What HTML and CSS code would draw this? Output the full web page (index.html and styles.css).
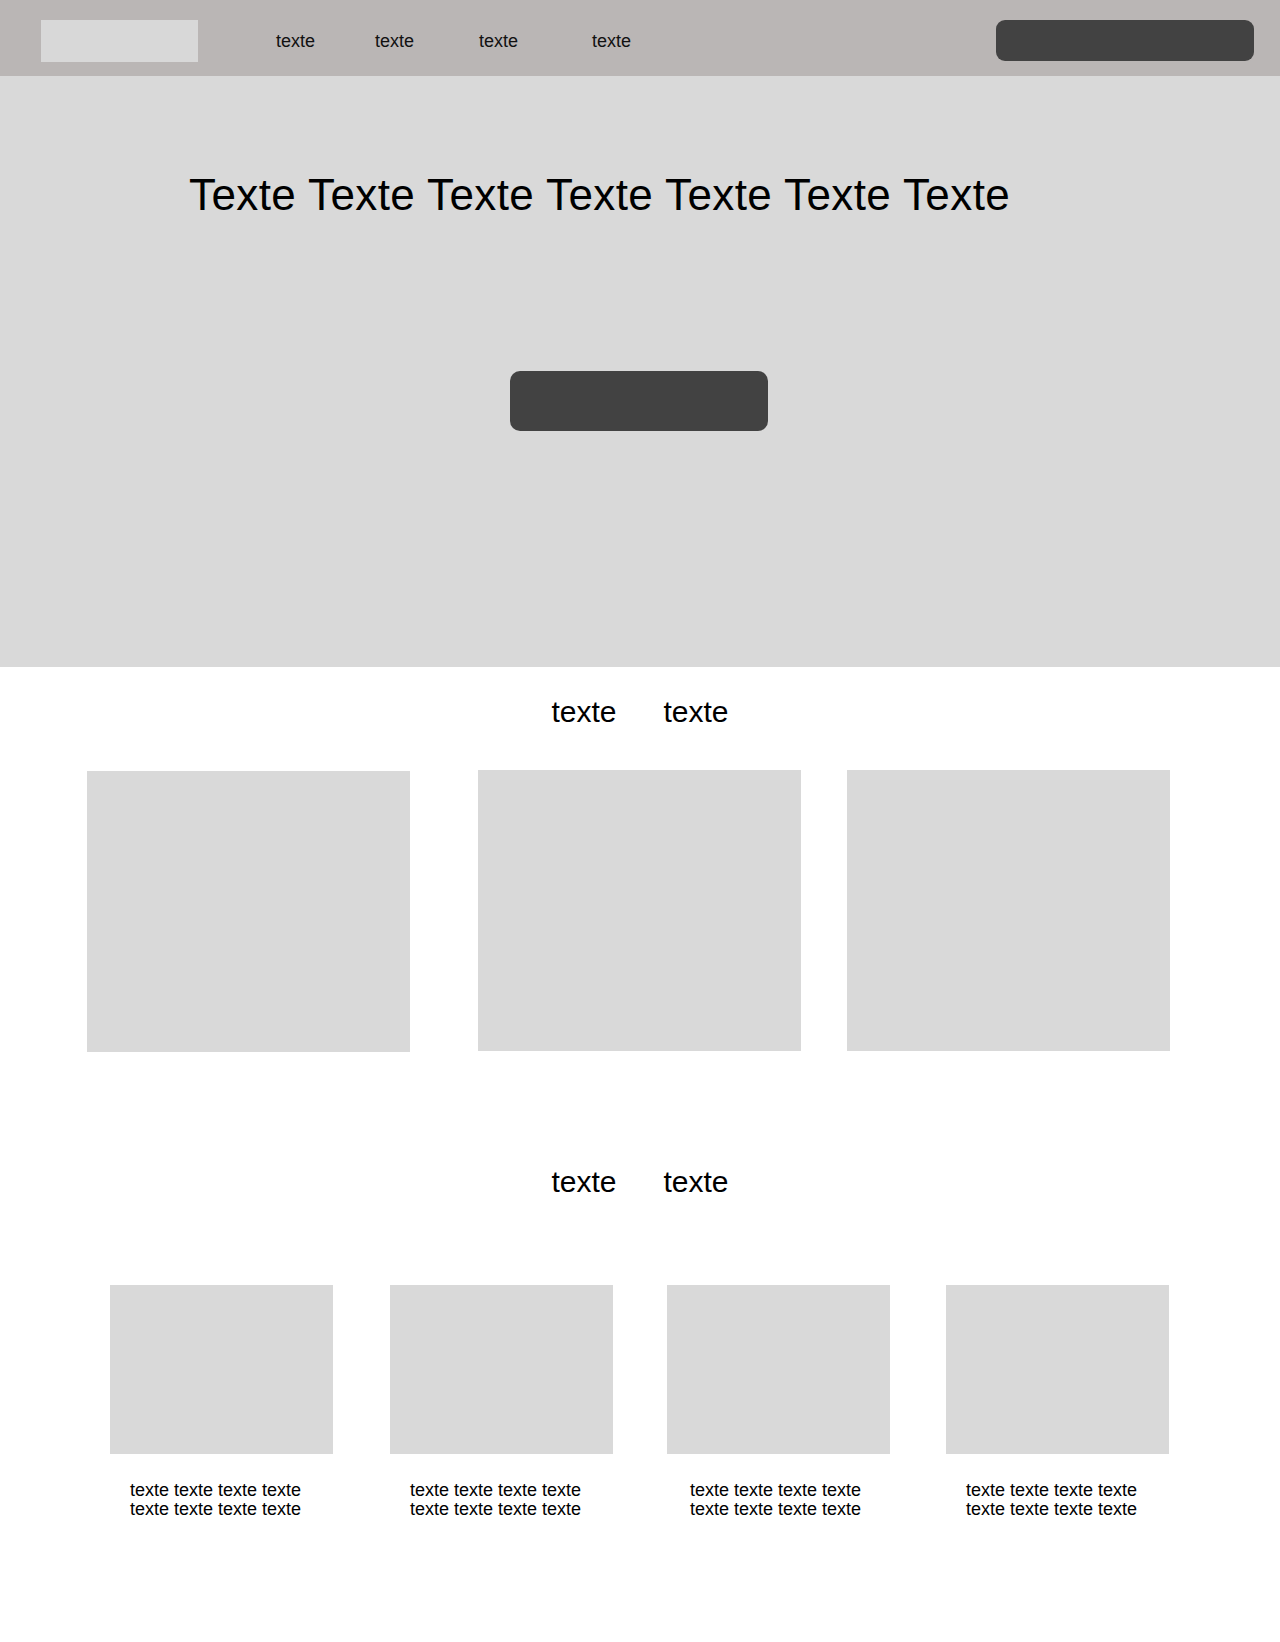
FILE: index.html
```html
<!DOCTYPE html>
<html>

<head>
    <meta name="viewport" content="width=device-width, initial-scale=1.0">
    <title>Texte</title>
    <link rel="stylesheet" href="styles.css">
</head>

<body>
    <header class="header">
        <div class="logo"></div>
        <nav class="nav">
            <a class="nav-link">texte</a>
            <a class="nav-link">texte</a>
            <a class="nav-link">texte</a>
            <a class="nav-link">texte</a>
        </nav>
        <div class="header-btn"></div>
    </header>

    <section class="hero">
        <h1 class="hero-title">Texte Texte Texte Texte Texte Texte Texte</h1>
        <div class="hero-btn"></div>
    </section>

    <section class="block">
        <div class="block-title">
            <span>texte</span>
            <span>texte</span>
        </div>
        <div class="row-big">
            <div class="card-big first"></div>
            <div class="card-big"></div>
            <div class="card-big"></div>
        </div>
    </section>

    <section class="block block-small">
        <div class="block-title">
            <span>texte</span>
            <span>texte</span>
        </div>
        <div class="row-small">
            <div class="item">
                <div class="item-img"></div>
                <p class="item-text">texte texte texte texte<br>texte texte texte texte</p>
            </div>
            <div class="item">
                <div class="item-img"></div>
                <p class="item-text">texte texte texte texte<br>texte texte texte texte</p>
            </div>
            <div class="item">
                <div class="item-img"></div>
                <p class="item-text">texte texte texte texte<br>texte texte texte texte</p>
            </div>
            <div class="item">
                <div class="item-img"></div>
                <p class="item-text">texte texte texte texte<br>texte texte texte texte</p>
            </div>
        </div>
    </section>
</body>

</html>
```

FILE: styles.css
```css
body {
    margin: 0;
    font-family: "Liberation Sans", Arial, sans-serif;
    color: #000000;
    background: #ffffff;
}

.header {
    height: 76px;
    box-sizing: border-box;
    padding-top: 20px;
    background: #bab6b5;
    display: flex;
    align-items: flex-start;
}

.logo {
    width: 157px;
    height: 42px;
    margin-left: 41px;
    background: #d8d8d8;
}

.nav {
    display: flex;
    margin: 12px 0 0 78px;
}

.nav-link {
    font-size: 18px;
    line-height: 1;
    color: #111111;
}

.nav-link:nth-child(2) {
    margin-left: 60px;
}

.nav-link:nth-child(3) {
    margin-left: 65px;
}

.nav-link:nth-child(4) {
    margin-left: 74px;
}

.header-btn {
    margin-left: auto;
    margin-right: 26px;
    width: 258px;
    height: 41px;
    border-radius: 9px;
    background: #424242;
}

.hero {
    height: 591px;
    background: #d9d9d9;
    padding-top: 97px;
    box-sizing: border-box;
}

.hero-title {
    margin: 0 0 0 189px;
    font-size: 44px;
    font-weight: normal;
    letter-spacing: 0.4px;
    line-height: 1;
}

.hero-btn {
    width: 258px;
    height: 60px;
    margin: 154px 0 0 510px;
    border-radius: 10px;
    background: #424242;
}

.block-title {
    display: flex;
    justify-content: center;
    gap: 47px;
    margin-top: 30px;
    font-size: 30px;
    line-height: 1;
}

.row-big {
    display: flex;
    align-items: flex-start;
    margin: 43px 0 0 87px;
}

.card-big {
    width: 323px;
    height: 281px;
    background: #d9d9d9;
    margin-left: 46px;
}

.card-big.first {
    margin-left: 0;
    margin-top: 1px;
    margin-right: 22px;
}

.block-small .block-title {
    margin-top: 115px;
}

.row-small {
    display: flex;
    margin: 88px 0 0 110px;
    padding-bottom: 130px;
}

.item {
    width: 223px;
}

.item:nth-child(2) {
    margin-left: 57px;
}

.item:nth-child(3) {
    margin-left: 54px;
}

.item:nth-child(4) {
    margin-left: 56px;
}

.item-img {
    height: 169px;
    background: #d9d9d9;
}

.item-text {
    margin: 27px 0 0 20px;
    font-size: 18px;
    line-height: 19px;
}

.item:nth-child(3) .item-text {
    margin-left: 23px;
}
```
